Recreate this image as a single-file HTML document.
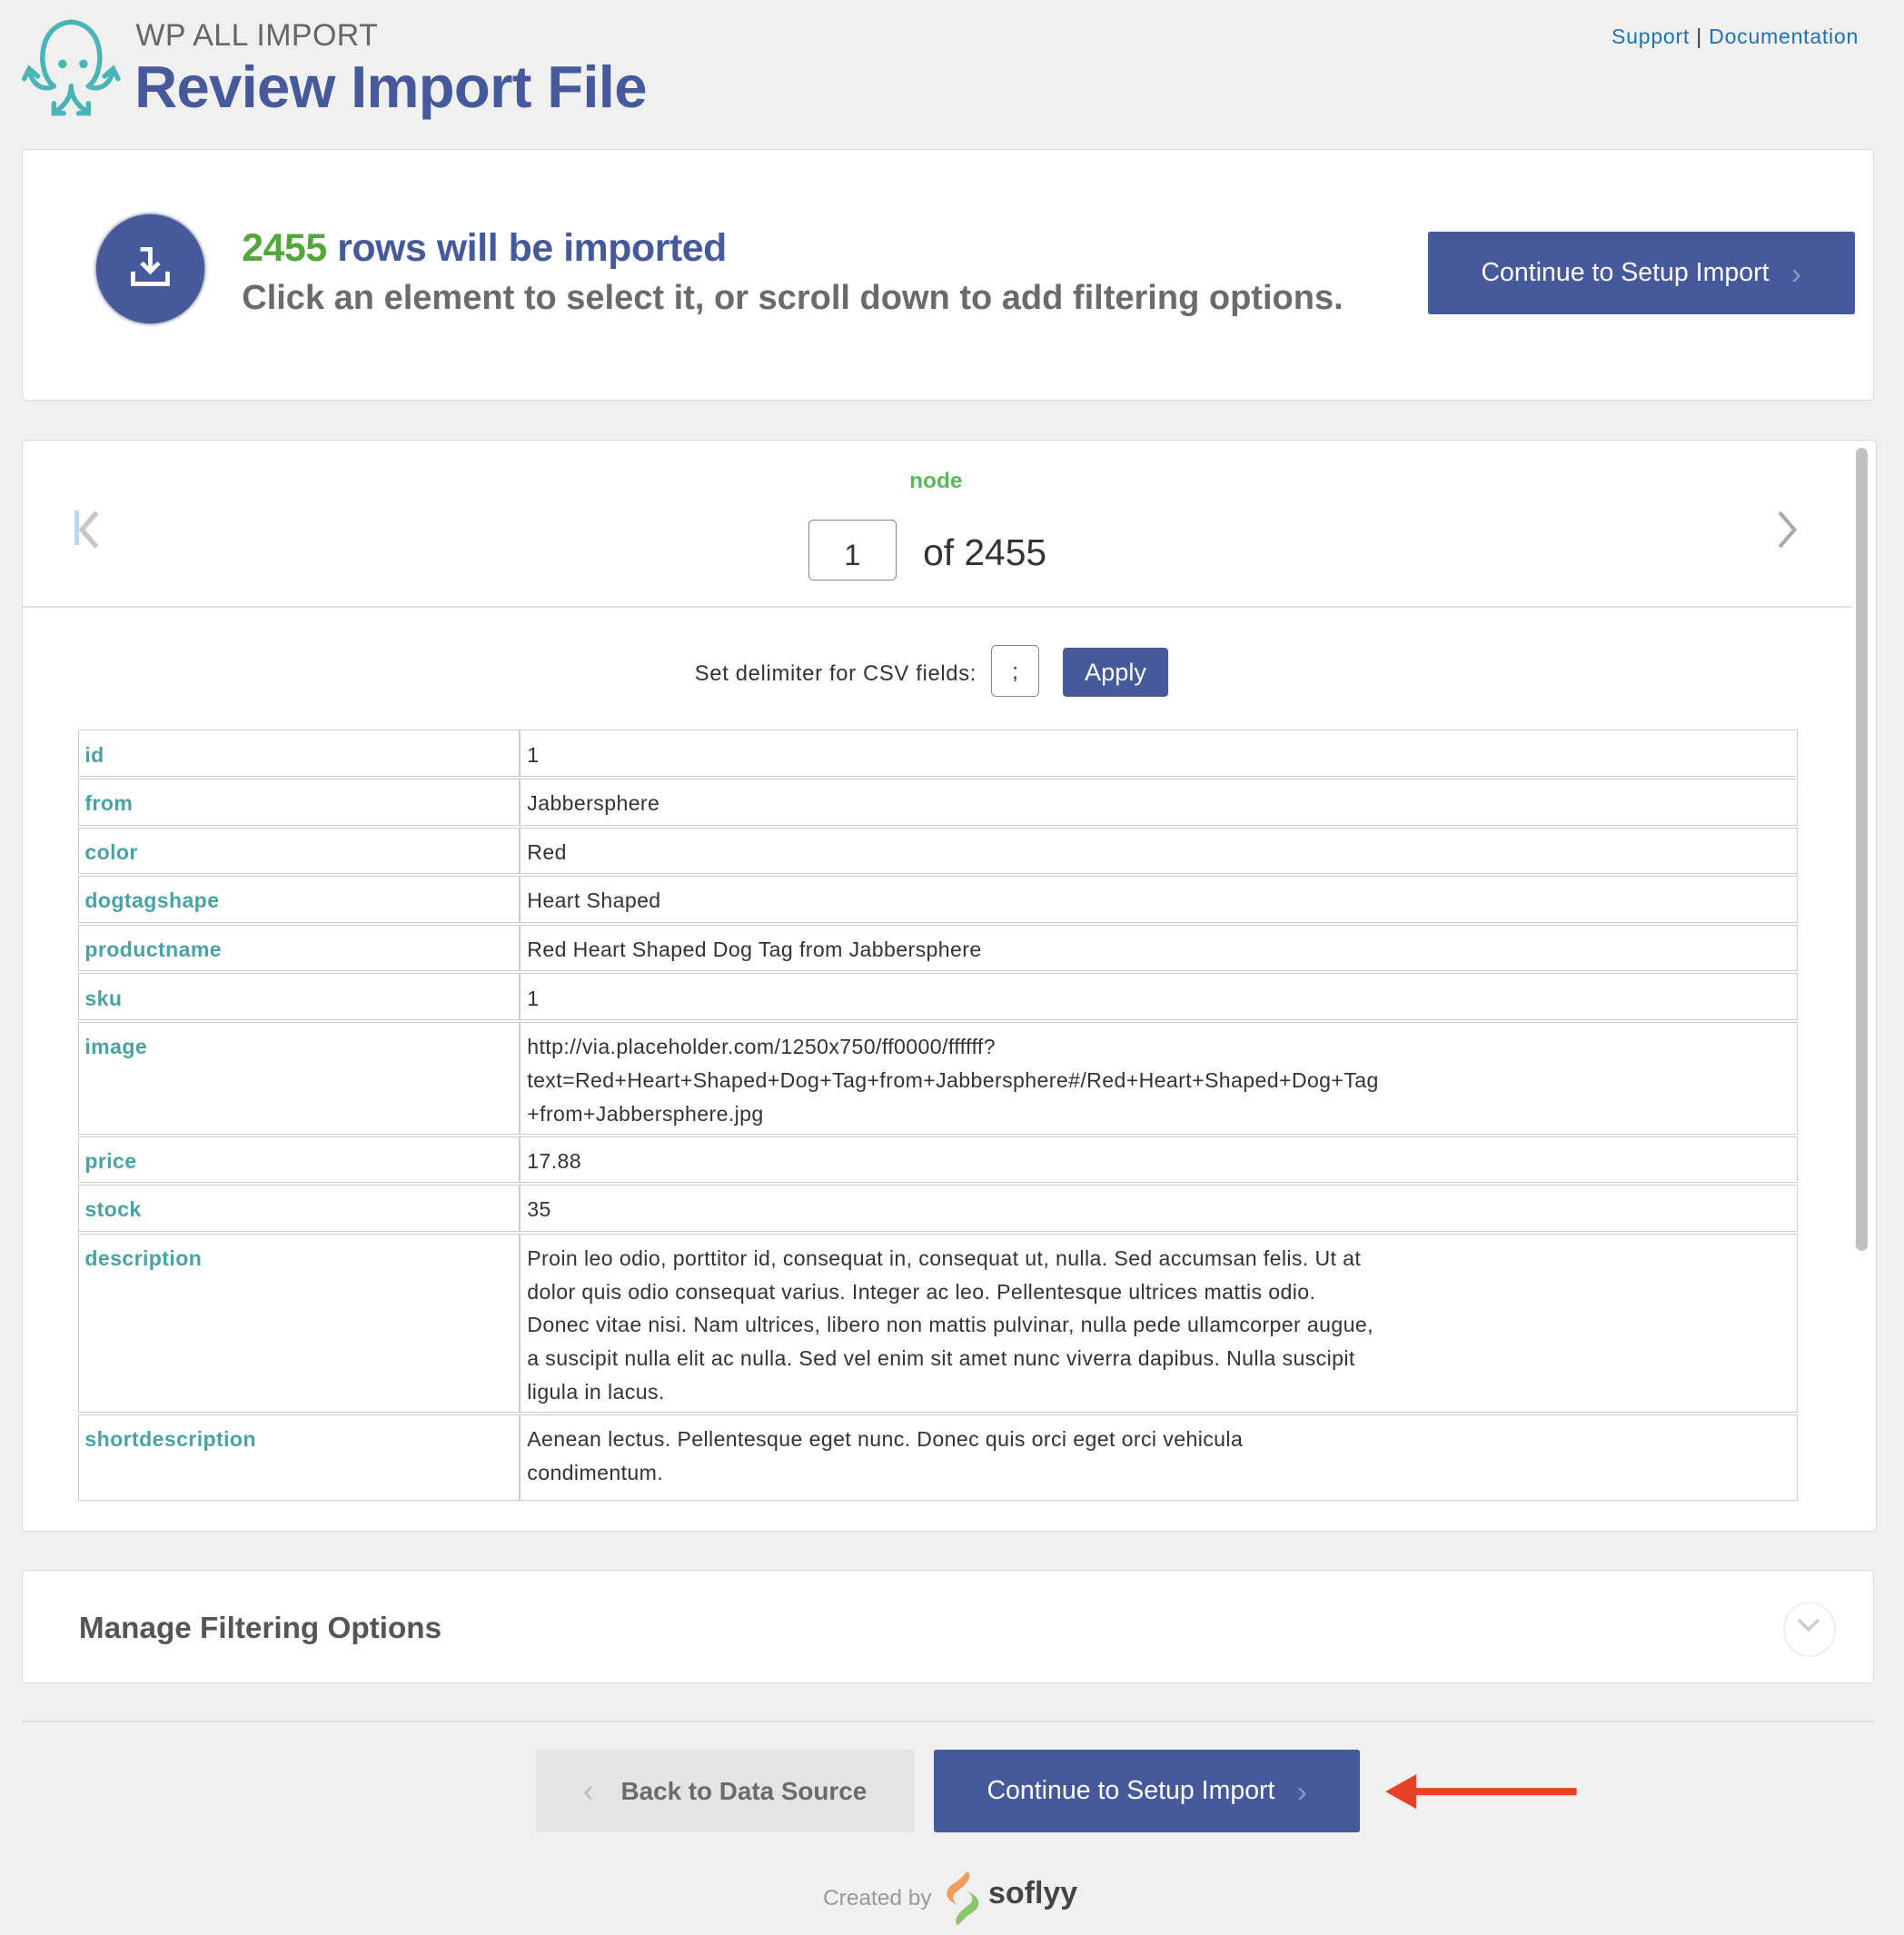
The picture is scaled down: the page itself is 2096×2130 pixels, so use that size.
<!DOCTYPE html>
<html><head><meta charset="utf-8"><style>
html,body{margin:0;padding:0;background:#f0f0f1;}
body{width:2096px;height:2130px;overflow:hidden;font-family:"Liberation Sans",sans-serif;}
#w{zoom:1.35838;position:relative;width:1543px;height:1568px;}
.a{position:absolute;}
.card{position:absolute;background:#fff;border:1px solid #dcdcde;border-radius:4px;box-sizing:border-box;}
.btn{position:absolute;background:#46599a;color:#fff;font-size:21px;display:flex;align-items:center;justify-content:center;border-radius:2px;}
table{border-collapse:separate;border-spacing:0 2px;position:absolute;left:63px;top:590px;width:1394px;font-size:17px;}
td{border:1px solid #ccc;vertical-align:top;padding:6px 5px 0;line-height:27px;color:#333;}
td.k{color:#4aa3a3;font-weight:bold;width:347px;}
td.v div{white-space:nowrap;}
</style></head><body><div id="w">
<svg class="a" style="left:18px;top:12px" width="80" height="84" viewBox="0 0 80 84" fill="none" stroke="#4bb4b4" stroke-width="4" stroke-linecap="round">
<path d="M26 58 C12 48 12 8 40 6 C68 8 68 48 54 58"/>
<circle cx="33" cy="40" r="1.5" fill="#4bb4b4"/><circle cx="50" cy="40" r="1.5" fill="#4bb4b4"/>
<path d="M26 58 C18 62 8 58 6 44 M2 52 L6 44 L13 50"/>
<path d="M54 58 C62 62 72 58 74 44 M67 50 L74 44 L78 52"/>
<path d="M40 58 C40 68 34 74 26 80 M26 72 L26 80 L34 80"/>
<path d="M40 58 C40 68 46 74 54 80 M54 72 L54 80 L46 80"/>
</svg>
<div class="a" style="left:110px;top:15px;font-size:25px;color:#666;letter-spacing:.3px">WP ALL IMPORT</div>
<div class="a" style="left:109px;top:43px;font-size:48px;font-weight:bold;color:#46599a;letter-spacing:-0.5px">Review Import File</div>
<div class="a" style="left:1306px;top:20px;font-size:17px;color:#2271b1;letter-spacing:0.55px">Support <span style="color:#333">|</span> Documentation</div>

<div class="card" style="left:18px;top:121px;width:1501px;height:204px"></div>
<div class="a" style="left:78px;top:174px;width:88px;height:88px;border-radius:50%;background:#46599a;box-shadow:0 0 3px #2e3d6e"></div>
<svg class="a" style="left:104px;top:198px" width="36" height="38" viewBox="0 0 36 38" fill="none" stroke="#fff" stroke-width="3.5"><path d="M10 4 H18 V22 M11 15 L18 22 L25 15"/><path d="M4 22 V32 H32 V22"/></svg>
<div class="a" style="left:196px;top:183px;font-size:31.5px;font-weight:bold;color:#46599a;letter-spacing:-0.3px"><span style="color:#54a53a">2455</span> rows will be imported</div>
<div class="a" style="left:196px;top:226px;font-size:28px;font-weight:bold;color:#6b6b6b">Click an element to select it, or scroll down to add filtering options.</div>
<div class="btn" style="left:1157px;top:188px;width:346px;height:67px">Continue to Setup Import <span style="color:#8d9ac4;margin-left:18px;font-size:24px">›</span></div>

<div class="card" style="left:18px;top:356px;width:1503px;height:885px;overflow:hidden">
<div class="a" style="left:1485px;top:6px;width:10px;height:651px;border-radius:5px;background:#c1c1c1"></div>
<div class="a" style="left:0;top:134px;width:1482px;height:2px;background:#e0e0e0"></div>
</div>
<div class="a" style="left:737px;top:380px;font-size:18px;font-weight:bold;color:#5cb85c">node</div>
<div class="a" style="left:60px;top:414px;width:4px;height:28px;background:#bcd6f5"></div>
<svg class="a" style="left:60px;top:412px" width="24" height="34"><path d="M18 3 L6 17 L18 31" stroke="#c8c8c8" stroke-width="4" fill="none"/></svg>
<svg class="a" style="left:1436px;top:412px" width="24" height="34"><path d="M6 3 L18 17 L6 31" stroke="#aaa" stroke-width="3" fill="none"/></svg>
<div class="a" style="left:655px;top:421px;width:70px;height:48px;border:1px solid #888;border-radius:4px;font-size:24px;text-align:center;line-height:56px;color:#333">1</div>
<div class="a" style="left:748px;top:431px;font-size:30px;color:#333">of 2455</div>
<div class="a" style="left:563px;top:536px;font-size:17.5px;color:#333;letter-spacing:0.5px">Set delimiter for CSV fields:</div>
<div class="a" style="left:803px;top:523px;width:38px;height:40px;border:1px solid #888;border-radius:4px;font-size:18px;text-align:center;line-height:42px;color:#333">;</div>
<div class="btn" style="left:861px;top:525px;width:86px;height:40px;font-size:20px;border-radius:3px">Apply</div>

<div class="a" style="left:0;top:590px;width:1500px;height:628px;overflow:hidden">
<table style="left:63px;top:0;letter-spacing:0.3px">
<tr style="height:38px"><td class="k">id</td><td class="v"><div>1</div></td></tr>
<tr style="height:38px"><td class="k">from</td><td class="v"><div>Jabbersphere</div></td></tr>
<tr style="height:38px"><td class="k">color</td><td class="v"><div>Red</div></td></tr>
<tr style="height:38px"><td class="k">dogtagshape</td><td class="v"><div>Heart Shaped</div></td></tr>
<tr style="height:38px"><td class="k">productname</td><td class="v"><div>Red Heart Shaped Dog Tag from Jabbersphere</div></td></tr>
<tr style="height:38px"><td class="k">sku</td><td class="v"><div>1</div></td></tr>
<tr style="height:91px"><td class="k">image</td><td class="v"><div>http://via.placeholder.com/1250x750/ff0000/ffffff?<br>text=Red+Heart+Shaped+Dog+Tag+from+Jabbersphere#/Red+Heart+Shaped+Dog+Tag<br>+from+Jabbersphere.jpg</div></td></tr>
<tr style="height:38px"><td class="k">price</td><td class="v"><div>17.88</div></td></tr>
<tr style="height:38px"><td class="k">stock</td><td class="v"><div>35</div></td></tr>
<tr style="height:145px"><td class="k">description</td><td class="v"><div>Proin leo odio, porttitor id, consequat in, consequat ut, nulla. Sed accumsan felis. Ut at<br>dolor quis odio consequat varius. Integer ac leo. Pellentesque ultrices mattis odio.<br>Donec vitae nisi. Nam ultrices, libero non mattis pulvinar, nulla pede ullamcorper augue,<br>a suscipit nulla elit ac nulla. Sed vel enim sit amet nunc viverra dapibus. Nulla suscipit<br>ligula in lacus.</div></td></tr>
<tr style="height:70px"><td class="k">shortdescription</td><td class="v"><div>Aenean lectus. Pellentesque eget nunc. Donec quis orci eget orci vehicula<br>condimentum.</div></td></tr>
</table>
</div>

<div class="card" style="left:18px;top:1272px;width:1501px;height:92px"></div>
<div class="a" style="left:64px;top:1306px;font-size:24.5px;font-weight:bold;color:#555">Manage Filtering Options</div>
<div class="a" style="left:1445px;top:1298px;width:40px;height:42px;border:2px solid #eee;border-radius:50%"></div>
<svg class="a" style="left:1455px;top:1310px" width="22" height="14"><path d="M3 3 L11 11 L19 3" stroke="#ccc" stroke-width="2.5" fill="none"/></svg>
<div class="a" style="left:18px;top:1394px;width:1501px;height:2px;background:#dcdcde"></div>
<div class="btn" style="left:434px;top:1418px;width:307px;height:67px;background:#e4e4e4;color:#6b6b6b;font-weight:bold;font-size:20.5px"><span style="color:#bbb;margin-right:22px;font-size:26px;font-weight:normal">‹</span>Back to Data Source</div>
<div class="btn" style="left:757px;top:1418px;width:345px;height:67px">Continue to Setup Import <span style="color:#8d9ac4;margin-left:18px;font-size:24px">›</span></div>
<svg class="a" style="left:1120px;top:1432px" width="162" height="40"><path d="M3 20 L28 6 V17 H158 V23 H28 V34 Z" fill="#e84128"/></svg>
<div class="a" style="left:667px;top:1528px;font-size:18px;color:#999">Created by</div>
<svg class="a" style="left:764px;top:1514px" width="32" height="48"><path d="M20 2 C24 6 20 12 12 18 C6 22 8 26 12 30 L6 26 C0 20 4 14 12 10 Z" fill="#ef9d5a"/><path d="M12 46 C8 42 12 36 20 30 C26 26 24 22 20 18 L26 22 C32 28 28 34 20 38 Z" fill="#8cc56e"/></svg>
<div class="a" style="left:801px;top:1520px;font-size:25px;font-weight:bold;color:#444">soflyy</div>
</div></body></html>
